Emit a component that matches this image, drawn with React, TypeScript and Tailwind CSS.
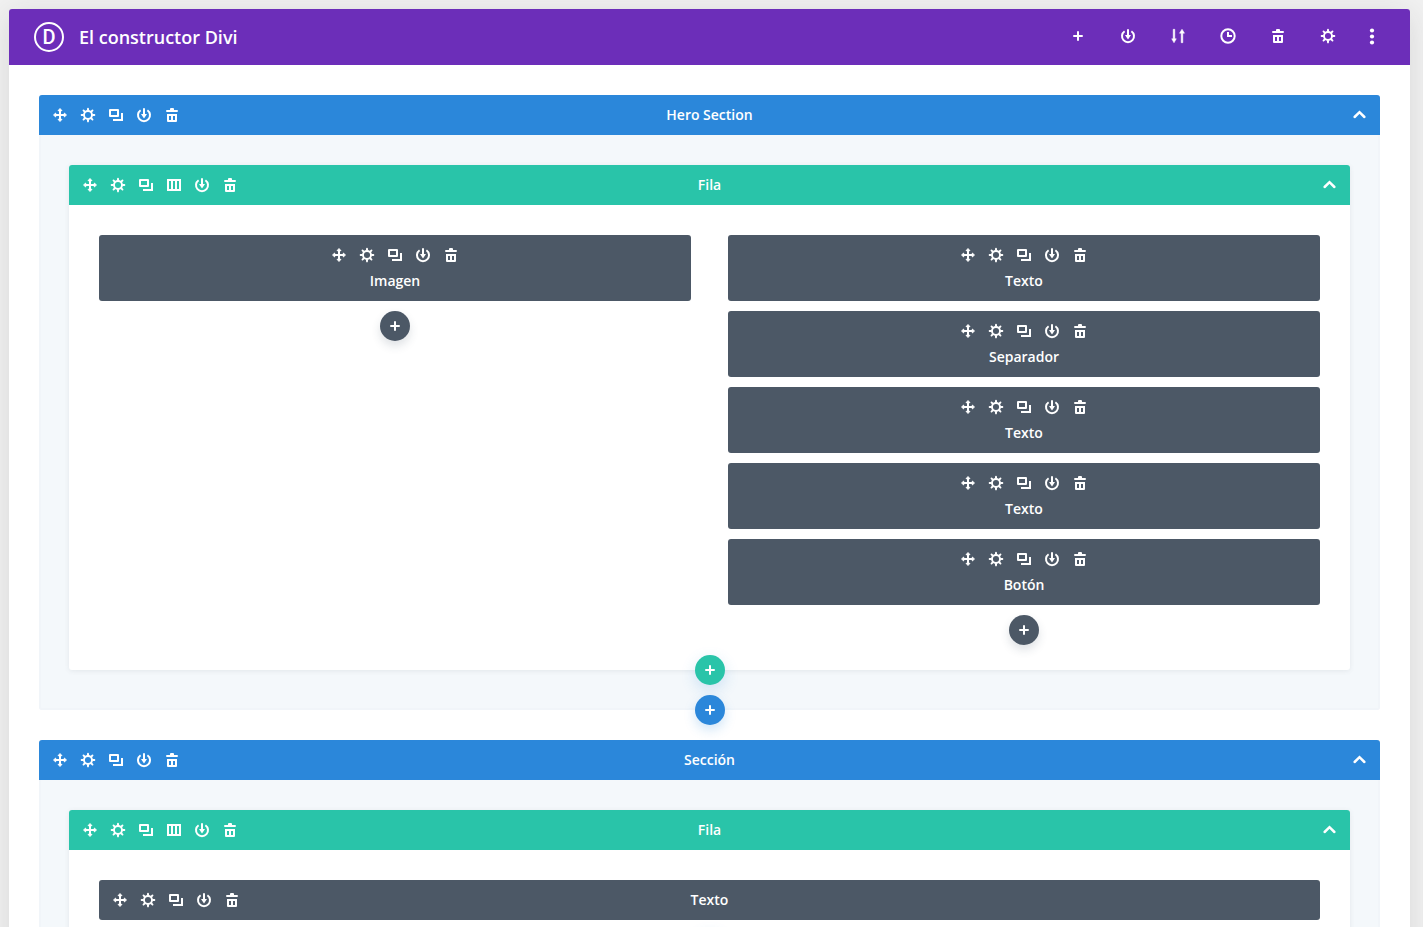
import type { ReactNode } from 'react';

type IconName =
  | 'move' | 'gear' | 'copy' | 'columns' | 'save' | 'trash'
  | 'plus' | 'sort' | 'clock' | 'dots' | 'chevron';

const LABELS: Record<IconName, string> = {
  move: 'Mover',
  gear: 'Ajustes',
  copy: 'Duplicar',
  columns: 'Cambiar columnas',
  save: 'Guardar',
  trash: 'Eliminar',
  plus: 'Añadir',
  sort: 'Portabilidad',
  clock: 'Historial',
  dots: 'Más opciones',
  chevron: 'Contraer',
};

const TEETH = [0, 45, 90, 135, 180, 225, 270, 315];

const SHAPES: Record<IconName, ReactNode> = {
  move: (
    <g fill="currentColor">
      <path d="M13 9h2v10h-2z M9 13h10v2H9z" />
      <path
        d="M14 7.5l2 2.2h-4z M14 20.5l2-2.2h-4z M7.5 14l2.2-2v4z M20.5 14l-2.2-2v4z"
        stroke="currentColor"
        strokeWidth="0.9"
        strokeLinejoin="round"
      />
    </g>
  ),
  gear: (
    <g>
      <circle cx="14" cy="14" r="4" fill="none" stroke="currentColor" strokeWidth="1.9" />
      {TEETH.map((a) => (
        <path key={a} d="M12.9 9.8l.2-2.2a.9.9 0 0 1 1.8 0l.2 2.2z" fill="currentColor" transform={`rotate(${a} 14 14)`} />
      ))}
    </g>
  ),
  copy: (
    <g fill="none" stroke="currentColor" strokeWidth="2">
      <path d="M8 9h8v6H8z" strokeLinejoin="round" />
      <path d="M20 12v7h-9" />
    </g>
  ),
  columns: (
    <path d="M8 9h12v10H8z M12 9v10 M16 9v10" fill="none" stroke="currentColor" strokeWidth="2" />
  ),
  save: (
    <g>
      <path d="M10.6 9.2a6 6 0 1 0 6.8 0" fill="none" stroke="currentColor" strokeWidth="2" />
      <path d="M13 8a1 1 0 0 1 2 0v5h2l-3 4.4-3-4.4h2z" fill="currentColor" />
    </g>
  ),
  trash: (
    <path
      fill="currentColor"
      fillRule="evenodd"
      d="M19 9h-3V8a1 1 0 0 0-1-1h-2a1 1 0 0 0-1 1v1H9a1 1 0 1 0 0 2h10a1 1 0 0 0 0-2zM9 20a1 1 0 0 0 1 1h8a1 1 0 0 0 1-1v-7H9zM11 15h2v4h-2zM15 15h2v4h-2z"
    />
  ),
  plus: (
    <path
      fill="currentColor"
      d="M18 13h-3v-3a1 1 0 0 0-2 0v3h-3a1 1 0 0 0 0 2h3v3a1 1 0 0 0 2 0v-3h3a1 1 0 0 0 0-2z"
    />
  ),
  sort: (
    <path
      fill="currentColor"
      stroke="currentColor"
      strokeWidth="0.5"
      strokeLinejoin="round"
      d="M9.2 7.3h1.6v9.5h1.5L10 20.8l-2.3-4h1.5z M17.2 20.7h1.6v-9.5h1.7L18 7.2l-2.5 4h1.7z"
    />
  ),
  clock: (
    <g fill="none" stroke="currentColor" strokeWidth="2">
      <circle cx="14" cy="14" r="6.7" />
      <path d="M14 10v4h4" />
    </g>
  ),
  dots: (
    <g fill="currentColor">
      <circle cx="14" cy="8.5" r="2.1" />
      <circle cx="14" cy="14.5" r="2.1" />
      <circle cx="14" cy="20.5" r="2.1" />
    </g>
  ),
  chevron: (
    <path
      d="M9.6 16l4.9-4.8 4.9 4.8"
      fill="none"
      stroke="currentColor"
      strokeWidth="2.5"
      strokeLinecap="round"
    />
  ),
};

function IconButton({ name, narrow = false }: { name: IconName; narrow?: boolean }) {
  return (
    <button
      type="button"
      aria-label={LABELS[name]}
      className={`flex h-7 shrink-0 items-center justify-center text-white ${narrow ? 'w-4' : 'w-7'}`}
    >
      <svg viewBox="0 0 28 28" className="size-7 shrink-0" aria-hidden="true">
        {SHAPES[name]}
      </svg>
    </button>
  );
}

const BASE: IconName[] = ['move', 'gear', 'copy', 'save', 'trash'];
const ROW: IconName[] = ['move', 'gear', 'copy', 'columns', 'save', 'trash'];

function Icons({ names }: { names: IconName[] }) {
  return (
    <div className="flex">
      {names.map((n) => (
        <IconButton key={n} name={n} />
      ))}
    </div>
  );
}

function Bar({ title, icons, color, collapsible = true }: {
  title: string;
  icons: IconName[];
  color: string;
  collapsible?: boolean;
}) {
  return (
    <div className={`grid h-10 grid-cols-[1fr_auto_1fr] items-center px-[7px] text-white ${color}`}>
      <Icons names={icons} />
      <h2 className="text-sm font-semibold">{title}</h2>
      <div className="flex justify-end">{collapsible && <IconButton name="chevron" />}</div>
    </div>
  );
}

function AddButton({ label, color }: { label: string; color: string }) {
  return (
    <button
      type="button"
      aria-label={label}
      className={`flex size-[30px] items-center justify-center rounded-full text-white ${color}`}
    >
      <svg viewBox="0 0 28 28" className="size-7" aria-hidden="true">
        {SHAPES.plus}
      </svg>
    </button>
  );
}

function Module({ title }: { title: string }) {
  return (
    <div className="flex flex-col items-center rounded-[3px] bg-[#4c5866] pt-1.5 pb-2 text-white">
      <Icons names={BASE} />
      <h3 className="text-sm leading-6 font-semibold">{title}</h3>
    </div>
  );
}

function Column({ modules }: { modules: string[] }) {
  return (
    <div className="flex flex-col gap-2.5">
      {modules.map((m, i) => (
        <Module key={i} title={m} />
      ))}
      <div className="flex justify-center">
        <AddButton label="Añadir módulo" color="bg-[#4c5866] shadow-[0_5px_10px_rgba(43,60,80,0.15)]" />
      </div>
    </div>
  );
}

function Row({ children }: { children: ReactNode }) {
  return (
    <div className="relative rounded-[3px] bg-white shadow-[0_1px_5px_rgba(76,88,102,0.1)]">
      <Bar title="Fila" icons={ROW} color="rounded-t-[3px] bg-[#29c4a9]" />
      <div className="px-[30px] pt-[30px] pb-[25px]">{children}</div>
      <div className="absolute inset-x-0 -bottom-[15px] flex justify-center">
        <AddButton label="Añadir fila" color="bg-[#29c4a9] shadow-[0_5px_15px_rgba(43,135,218,0.2)]" />
      </div>
    </div>
  );
}

function Section({ title, children }: { title: string; children: ReactNode }) {
  return (
    <section className="relative rounded-[3px] bg-[#f4f8fb] shadow-[inset_0_0_0_2px_#f1f5f9]">
      <Bar title={title} icons={BASE} color="rounded-t-[3px] bg-[#2b87da]" />
      <div className="px-[30px] pt-[30px] pb-10">{children}</div>
      <div className="absolute inset-x-0 -bottom-[15px] flex justify-center">
        <AddButton label="Añadir sección" color="bg-[#2b87da] shadow-[0_5px_12px_rgba(43,135,218,0.22)]" />
      </div>
    </section>
  );
}

export default function App() {
  return (
    <div className="h-screen overflow-hidden bg-[#f1f1f1] pt-[9px] pr-[13px] pl-[9px] font-['Open_Sans',sans-serif]">
      <main className="rounded-[3px] bg-white shadow-[0_5px_30px_rgba(43,43,43,0.12)]">
        <header className="flex h-14 items-center justify-between rounded-t-[3px] bg-[#6c2eb9] pr-[30px] pl-[25px] text-white">
          <div className="flex items-center gap-[15px]">
            <span
              aria-hidden="true"
              className="flex size-[30px] items-center justify-center rounded-full border-2 border-white font-['Roboto',sans-serif] text-xl leading-none font-medium"
            >
              D
            </span>
            <h1 className="text-lg font-semibold">El constructor Divi</h1>
          </div>
          <div className="flex gap-[22px] pb-0.5">
            <IconButton name="plus" />
            <IconButton name="save" />
            <IconButton name="sort" />
            <IconButton name="clock" />
            <IconButton name="trash" />
            <IconButton name="gear" />
            <IconButton name="dots" narrow />
          </div>
        </header>
        <div className="flex flex-col gap-[30px] p-[30px]">
          <Section title="Hero Section">
            <Row>
              <div className="grid grid-cols-2 gap-x-[37px]">
                <Column modules={['Imagen']} />
                <Column modules={['Texto', 'Separador', 'Texto', 'Texto', 'Botón']} />
              </div>
            </Row>
          </Section>
          <Section title="Sección">
            <Row>
              <Bar title="Texto" icons={BASE} color="rounded-[3px] bg-[#4c5866]" collapsible={false} />
            </Row>
          </Section>
        </div>
      </main>
    </div>
  );
}
